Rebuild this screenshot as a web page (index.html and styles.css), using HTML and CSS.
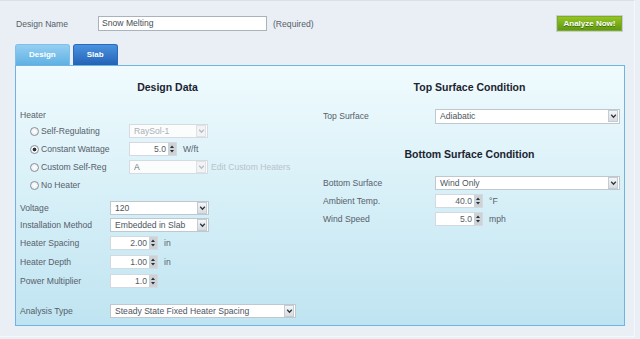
FILE: index.html
```html
<!DOCTYPE html>
<html lang="en">
<head>
    <meta charset="UTF-8">
    <title>Snow Melting - Design</title>
    <link rel="stylesheet" href="styles.css">
</head>
<body>
<div class="page">
    <!-- Design name + analyze -->
    <div class="topbar">
        <span class="name-label">Design Name</span>
        <div class="name-input">Snow Melting</div>
        <span class="required">(Required)</span>
        <div class="analyze-btn">Analyze Now!</div>
    </div>

    <div class="tabs">
        <div class="tab tab-active">Design</div>
        <div class="tab">Slab</div>
    </div>

    <div class="panel">
        <div class="col col-left">
            <h2 class="heading">Design Data</h2>
            <div class="group-label">Heater</div>

            <div class="radio-row">
                <span class="radio"></span><span class="radio-label">Self-Regulating</span>
                <div class="select select-disabled w-heater">
                    <span class="select-value">RaySol-1</span>
                    <span class="select-arrow"><svg width="7" height="8" viewBox="0 0 7 8"><path d="M1.2 2.8 L3.5 5.2 L5.8 2.8" fill="none" stroke="#b5bcc2" stroke-width="1.3"/></svg></span>
                </div>
            </div>
            <div class="radio-row">
                <span class="radio radio-on"></span><span class="radio-label">Constant Wattage</span>
                <div class="number">
                    <span class="number-value">5.0</span>
                    <span class="spinner"><svg width="8" height="12" viewBox="0 0 8 12"><path d="M2 5 L4 2.5 L6 5 Z M2 7 L4 9.5 L6 7 Z" fill="#2a2f34"/></svg></span>
                </div>
                <span class="unit">W/ft</span>
            </div>
            <div class="radio-row">
                <span class="radio"></span><span class="radio-label">Custom Self-Reg</span>
                <div class="select select-disabled w-heater">
                    <span class="select-value select-value-dark">A</span>
                    <span class="select-arrow"><svg width="7" height="8" viewBox="0 0 7 8"><path d="M1.2 2.8 L3.5 5.2 L5.8 2.8" fill="none" stroke="#b5bcc2" stroke-width="1.3"/></svg></span>
                </div>
                <span class="edit-link">Edit Custom Heaters</span>
            </div>
            <div class="radio-row">
                <span class="radio"></span><span class="radio-label">No Heater</span>
            </div>

            <div class="field-row row-voltage">
                <span class="field-label">Voltage</span>
                <div class="select w-voltage">
                    <span class="select-value">120</span>
                    <span class="select-arrow"><svg width="7" height="8" viewBox="0 0 7 8"><path d="M1.2 2.8 L3.5 5.2 L5.8 2.8" fill="none" stroke="#2f363c" stroke-width="1.3"/></svg></span>
                </div>
            </div>
            <div class="field-row row-short">
                <span class="field-label">Installation Method</span>
                <div class="select w-voltage">
                    <span class="select-value">Embedded in Slab</span>
                    <span class="select-arrow"><svg width="7" height="8" viewBox="0 0 7 8"><path d="M1.2 2.8 L3.5 5.2 L5.8 2.8" fill="none" stroke="#2f363c" stroke-width="1.3"/></svg></span>
                </div>
            </div>
            <div class="field-row row-tall">
                <span class="field-label">Heater Spacing</span>
                <div class="number">
                    <span class="number-value">2.00</span>
                    <span class="spinner"><svg width="8" height="12" viewBox="0 0 8 12"><path d="M2 5 L4 2.5 L6 5 Z M2 7 L4 9.5 L6 7 Z" fill="#2a2f34"/></svg></span>
                </div>
                <span class="unit">in</span>
            </div>
            <div class="field-row row-tall">
                <span class="field-label">Heater Depth</span>
                <div class="number">
                    <span class="number-value">1.00</span>
                    <span class="spinner"><svg width="8" height="12" viewBox="0 0 8 12"><path d="M2 5 L4 2.5 L6 5 Z M2 7 L4 9.5 L6 7 Z" fill="#2a2f34"/></svg></span>
                </div>
                <span class="unit">in</span>
            </div>
            <div class="field-row row-tall">
                <span class="field-label">Power Multiplier</span>
                <div class="number">
                    <span class="number-value">1.0</span>
                    <span class="spinner"><svg width="8" height="12" viewBox="0 0 8 12"><path d="M2 5 L4 2.5 L6 5 Z M2 7 L4 9.5 L6 7 Z" fill="#2a2f34"/></svg></span>
                </div>
            </div>

            <div class="field-row row-analysis">
                <span class="field-label">Analysis Type</span>
                <div class="select w-analysis">
                    <span class="select-value">Steady State Fixed Heater Spacing</span>
                    <span class="select-arrow"><svg width="7" height="8" viewBox="0 0 7 8"><path d="M1.2 2.8 L3.5 5.2 L5.8 2.8" fill="none" stroke="#2f363c" stroke-width="1.3"/></svg></span>
                </div>
            </div>
        </div>

        <div class="col col-right">
            <h2 class="heading">Top Surface Condition</h2>
            <div class="field-row row-top">
                <span class="field-label field-label-wide">Top Surface</span>
                <div class="select select-wide select-tall">
                    <span class="select-value">Adiabatic</span>
                    <span class="select-arrow"><svg width="7" height="8" viewBox="0 0 7 8"><path d="M1.2 2.8 L3.5 5.2 L5.8 2.8" fill="none" stroke="#2f363c" stroke-width="1.3"/></svg></span>
                </div>
            </div>

            <h2 class="heading heading-second">Bottom Surface Condition</h2>
            <div class="field-row row-bottom">
                <span class="field-label field-label-wide">Bottom Surface</span>
                <div class="select select-wide">
                    <span class="select-value">Wind Only</span>
                    <span class="select-arrow"><svg width="7" height="8" viewBox="0 0 7 8"><path d="M1.2 2.8 L3.5 5.2 L5.8 2.8" fill="none" stroke="#2f363c" stroke-width="1.3"/></svg></span>
                </div>
            </div>
            <div class="field-row row-short">
                <span class="field-label field-label-wide">Ambient Temp.</span>
                <div class="number">
                    <span class="number-value">40.0</span>
                    <span class="spinner"><svg width="8" height="12" viewBox="0 0 8 12"><path d="M2 5 L4 2.5 L6 5 Z M2 7 L4 9.5 L6 7 Z" fill="#2a2f34"/></svg></span>
                </div>
                <span class="unit">°F</span>
            </div>
            <div class="field-row row-tall">
                <span class="field-label field-label-wide">Wind Speed</span>
                <div class="number">
                    <span class="number-value">5.0</span>
                    <span class="spinner"><svg width="8" height="12" viewBox="0 0 8 12"><path d="M2 5 L4 2.5 L6 5 Z M2 7 L4 9.5 L6 7 Z" fill="#2a2f34"/></svg></span>
                </div>
                <span class="unit">mph</span>
            </div>
        </div>
    </div>
</div>
</body>
</html>
```

FILE: styles.css
```css
body {
    margin: 0;
    background-color: #e9eff4;
    font-family: "Liberation Sans", Arial, sans-serif;
    font-size: 8.6px;
    color: #56606a;
}

.page {
    width: 635px;
    height: 337px;
    box-sizing: border-box;
    border-top: 1px solid #d9e0e6;
    border-right: 1px solid #f5f8fa;
    border-bottom: 1px solid #f5f8fa;
}

/* --- Top bar --- */
.topbar {
    display: flex;
    align-items: center;
    height: 17px;
    padding: 14px 11px 12px 16px;
}

.name-label {
    width: 82px;
}

.name-input {
    width: 169px;
    height: 15px;
    box-sizing: border-box;
    border: 1px solid #a9b3bc;
    background: #fff;
    padding-left: 3px;
    line-height: 13px;
    color: #464e56;
}

.required {
    margin-left: 6px;
}

.analyze-btn {
    margin-left: auto;
    width: 67px;
    height: 17px;
    box-sizing: border-box;
    border: 1px solid #c7cfd6;
    background: linear-gradient(#98c826, #5c9510);
    box-shadow: inset 0 0 0 1px #7eab22;
    color: #fff;
    font-size: 8px;
    font-weight: bold;
    line-height: 15px;
    text-align: center;
    text-shadow: 0 1px 0 #3f6b08;
}

/* --- Tabs --- */
.tabs {
    display: flex;
    gap: 3px;
    padding-left: 15px;
    height: 21px;
}

.tab {
    height: 21px;
    box-sizing: border-box;
    padding: 0 13px;
    border: 1px solid #2b69bc;
    border-bottom: none;
    border-radius: 3px 3px 0 0;
    background: linear-gradient(#4a93de, #2462b6);
    color: #fff;
    font-size: 8px;
    font-weight: bold;
    line-height: 20px;
}

.tab-active {
    border-color: #7fc0e9;
    background: linear-gradient(#95cff1, #5fb1e3);
}

/* --- Panel --- */
.panel {
    display: flex;
    margin-left: 15px;
    width: 610px;
    height: 261px;
    box-sizing: border-box;
    padding-top: 13px;
    border: 1px solid #6fb4e2;
    background: linear-gradient(#f0fbfe, #bfe4f1);
}

.col-left {
    width: 303px;
}

.col-right {
    flex: 1;
    padding-right: 4px;
}

.heading {
    margin: 0;
    height: 16px;
    line-height: 16px;
    text-align: center;
    font-size: 10.5px;
    font-weight: bold;
    color: #1c2330;
}

.heading-second {
    margin-top: 21px;
}

.group-label {
    margin-top: 13px;
    height: 14px;
    line-height: 14px;
    padding-left: 4px;
}

/* --- Radios --- */
.radio-row {
    display: flex;
    align-items: center;
    height: 18px;
    padding-left: 14px;
}

.radio {
    width: 9px;
    height: 9px;
    box-sizing: border-box;
    border: 1px solid #87919a;
    border-radius: 50%;
    background: radial-gradient(#ffffff, #e3e8ec);
    margin-right: 2px;
}

.radio-on {
    background: radial-gradient(circle, #2c3238 0 1.6px, #f4f6f8 2.2px);
}

.radio-label {
    width: 88px;
}

.edit-link {
    margin-left: 3px;
    color: #b9c3ca;
}

/* --- Field rows --- */
.field-row {
    display: flex;
    align-items: center;
    height: 17px;
    padding-left: 4px;
}

.row-voltage { margin-top: 5px; }
.row-tall { height: 19px; }
.row-analysis { margin-top: 12px; height: 18px; }
.row-top { margin-top: 12px; height: 18px; }
.row-bottom { margin-top: 12px; height: 18px; }

.field-label {
    width: 90px;
}

.field-label-wide {
    width: 112px;
}

/* --- Selects --- */
.select {
    display: flex;
    align-items: center;
    height: 14px;
    box-sizing: border-box;
    border: 1px solid #bfc8cf;
    background: #fff;
    color: #4c5660;
}

.select-tall { height: 15px; }

.select-value {
    flex: 1;
    padding-left: 4px;
    white-space: nowrap;
    overflow: hidden;
}

.select-arrow {
    display: flex;
    align-items: center;
    justify-content: center;
    width: 8px;
    height: 10px;
    margin-right: 1px;
    border: 1px solid #c4cbd1;
    background: linear-gradient(#f4f6f8, #d6dce1);
}

.select-disabled {
    border-color: #d5dbe0;
    background: #fbfcfc;
    color: #a9b2b9;
}

.select-disabled .select-arrow {
    border-color: #dde2e6;
    background: #f1f3f5;
}

.select-value-dark {
    color: #6d757c;
}

.w-heater { width: 79px; }
.w-voltage { width: 99px; }
.w-analysis { width: 186px; }
.select-wide { flex: 1; }

/* --- Number inputs --- */
.number {
    display: flex;
    align-items: center;
    width: 48px;
    height: 14px;
    box-sizing: border-box;
    border: 1px solid #d3d9de;
    background: #fff;
}

.number-value {
    flex: 1;
    text-align: right;
    padding-right: 2px;
    color: #555d65;
}

.spinner {
    display: flex;
    width: 8px;
    height: 12px;
    background: #cdd2d6;
}

.unit {
    margin-left: 6px;
}
```
